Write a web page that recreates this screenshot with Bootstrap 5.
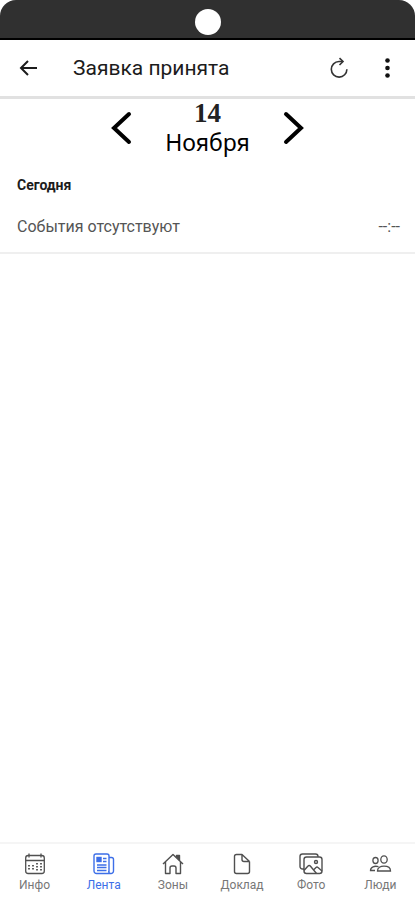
<!DOCTYPE html>
<html lang="ru">
<head>
<meta charset="utf-8">
<meta name="viewport" content="width=device-width, initial-scale=1">
<title>Заявка принята</title>
<link href="https://cdn.jsdelivr.net/npm/bootstrap@5.3.0/dist/css/bootstrap.min.css" rel="stylesheet">
<style>
body { font-family: Roboto, "Noto Sans", sans-serif; color: #1c1c1c; }
.device-bar { height: 40px; background: #303030; border-bottom: 2px solid #000; border-radius: 16px 16px 0 0; padding-top: 5px; }
.camera { width: 26px; height: 26px; }
.app-bar { height: 59px; border-bottom: 3px solid #e1e1e1; padding: 0 14px; }
.app-title { font-size: 21px; line-height: 24px; margin-left: 30px; font-weight: 400; color: #1c1c1c; }
.icon-btn { line-height: 0; }
.date-picker { gap: 32px; height: 58px; }
.day-number { font: bold 27px/28px "Liberation Serif", serif; color: #222; }
.month-name { font: 23px/30px "Noto Sans", sans-serif; }
.section-title { font-size: 14px; line-height: 16px; font-weight: 700; padding: 20px 17px 0; }
.event-row { font-size: 16px; line-height: 20px; padding: 24px 15px 15px 17px; border-bottom: 2px solid #efefef; color: #555; }
.tab-bar { border-top: 2px solid #f5f5f5; padding: 8px 0 7px; }
.tab-link { font-size: 12px; line-height: 16px; color: #777; gap: 1px; }
.tab-link svg { color: #505050; }
.tab-link.active, .tab-link.active svg { color: #3d6fe8; }
</style>
</head>
<body class="bg-white d-flex flex-column min-vh-100">
<div class="device-bar d-flex align-items-center justify-content-center"><span class="camera bg-white rounded-circle"></span></div>
<header class="app-bar d-flex align-items-center">
  <button type="button" class="icon-btn btn p-0 border-0" aria-label="Назад">
    <svg width="29" height="24" viewBox="0 0 29 24" fill="none" stroke="#1c1c1c" stroke-width="2"><path d="M23 12H8M14 5l-7 7 7 7"/></svg>
  </button>
  <h1 class="app-title mb-0 me-auto">Заявка принята</h1>
  <button type="button" class="icon-btn btn p-0 border-0" aria-label="Обновить">
    <svg width="24" height="24" viewBox="0 0 24 24" fill="none" stroke="#333" stroke-width="1.600"><path d="M15.500 5.500H12A7.800 7.800 0 1 0 19.900 13.300"/><path d="M12.500 2.200l3.500 3.300-3.500 3.500"/></svg>
  </button>
  <button type="button" class="icon-btn btn p-0 border-0 ms-4" aria-label="Меню">
    <svg width="26" height="24" viewBox="0 0 26 24" fill="#111"><circle cx="12.500" cy="4.500" r="2.300"/><circle cx="12.500" cy="12" r="2.300"/><circle cx="12.500" cy="19.500" r="2.300"/></svg>
  </button>
</header>
<main class="flex-grow-1">
  <div class="date-picker d-flex align-items-center justify-content-center">
    <button type="button" class="icon-btn btn p-0 border-0" aria-label="Предыдущий день">
      <svg width="24" height="34" viewBox="0 0 24 34" fill="none" stroke="#000" stroke-width="4" stroke-linecap="round"><path d="M20 3L5 17l15 14"/></svg>
    </button>
    <div class="text-center text-black">
      <div class="day-number">14</div>
      <div class="month-name">Ноября</div>
    </div>
    <button type="button" class="icon-btn btn p-0 border-0" aria-label="Следующий день">
      <svg width="24" height="34" viewBox="0 0 24 34" fill="none" stroke="#000" stroke-width="4" stroke-linecap="round"><path d="M4 3l15 14L4 31"/></svg>
    </button>
  </div>
  <h2 class="section-title mb-0">Сегодня</h2>
  <div class="event-row d-flex justify-content-between"><span>События отсутствуют</span><span>--:--</span></div>
</main>
<nav class="tab-bar row row-cols-6 g-0 text-center" aria-label="Разделы">
  <a href="#" class="tab-link d-flex flex-column align-items-center text-decoration-none">
    <svg width="24" height="24" viewBox="0 0 24 24" fill="none" stroke="currentColor" stroke-width="1.300"><rect x="2.700" y="3.500" width="18.600" height="18" rx="2.500"/><path d="M2.700 8.500h18.600M6 1.500v4M18 1.500v4"/><path d="M14 11v8M18 11v8M10 13v6M6 13v6" stroke-width="1.800" stroke-dasharray="1.600 1.400"/></svg>
    <span>Инфо</span></a>
  <a href="#" class="tab-link active d-flex flex-column align-items-center text-decoration-none" aria-current="page">
    <svg width="24" height="24" viewBox="0 0 24 24" fill="none" stroke="currentColor" stroke-width="1.400"><path d="M17 20V4a2 2 0 0 0-2-2H4a2 2 0 0 0-2 2v15a2.500 2.500 0 0 0 2.500 2.500H19a2.500 2.500 0 0 0 2.500-2.500V7.500a2 2 0 0 0-2-2H17M17 18.500a2 2 0 0 0 2 3"/><path d="M11 6.500h3.500M11 9.500h3.500M5 13h9.500M5 15.500h9.500M5 18.500h9.500"/><rect x="5" y="5.500" width="4" height="4" fill="currentColor"/></svg>
    <span>Лента</span></a>
  <a href="#" class="tab-link d-flex flex-column align-items-center text-decoration-none">
    <svg width="24" height="24" viewBox="0 0 24 24" fill="none" stroke="currentColor" stroke-width="1.400" stroke-linejoin="round"><path d="M2 12L12 2.500 22 12M4.500 10v11.500H9V16a2 2 0 0 1 2-2h2a2 2 0 0 1 2 2v5.500h4.500V10"/><path d="M15.500 5.500V3.500h3v5" fill="currentColor"/></svg>
    <span>Зоны</span></a>
  <a href="#" class="tab-link d-flex flex-column align-items-center text-decoration-none">
    <svg width="24" height="24" viewBox="0 0 24 24" fill="none" stroke="currentColor" stroke-width="1.400" stroke-linejoin="round"><path d="M19.500 9.500v10a2 2 0 0 1-2 2h-11a2 2 0 0 1-2-2v-15a2 2 0 0 1 2-2H12l7.500 7M12 2.500V7.500a2 2 0 0 0 2 2h5.500"/></svg>
    <span>Доклад</span></a>
  <a href="#" class="tab-link d-flex flex-column align-items-center text-decoration-none">
    <svg width="24" height="24" viewBox="0 0 24 24" fill="none" stroke="currentColor" stroke-width="1.400" stroke-linejoin="round"><path d="M5 17H3.500a2.500 2.500 0 0 1-2.500-2.500V4.500A2.500 2.500 0 0 1 3.500 2h13A2.500 2.500 0 0 1 19 4.500V5"/><rect x="5" y="5" width="18" height="16.500" rx="2.500"/><circle cx="17" cy="10" r="1.500"/><path d="M5 18.500l4-4.500a1.500 1.500 0 0 1 2.300 0l6.200 7.500M14.500 18l2.500-2.500a1.500 1.500 0 0 1 2 0l4 3.500"/></svg>
    <span>Фото</span></a>
  <a href="#" class="tab-link d-flex flex-column align-items-center text-decoration-none">
    <svg width="24" height="24" viewBox="0 0 24 24" fill="none" stroke="currentColor" stroke-width="1.300"><ellipse cx="16" cy="7.500" rx="3.200" ry="3.700"/><path d="M9.500 19c0-3.500 3-4.800 6.500-4.800s6.500 1.300 6.500 4.800z"/><ellipse cx="7.500" cy="8.500" rx="2.600" ry="3"/><path d="M10.500 14.700C6.500 13.500 2.500 15 2.500 18.500H7"/></svg>
    <span>Люди</span></a>
</nav>
<script src="https://cdn.jsdelivr.net/npm/bootstrap@5.3.0/dist/js/bootstrap.bundle.min.js"></script>
</body>
</html>
